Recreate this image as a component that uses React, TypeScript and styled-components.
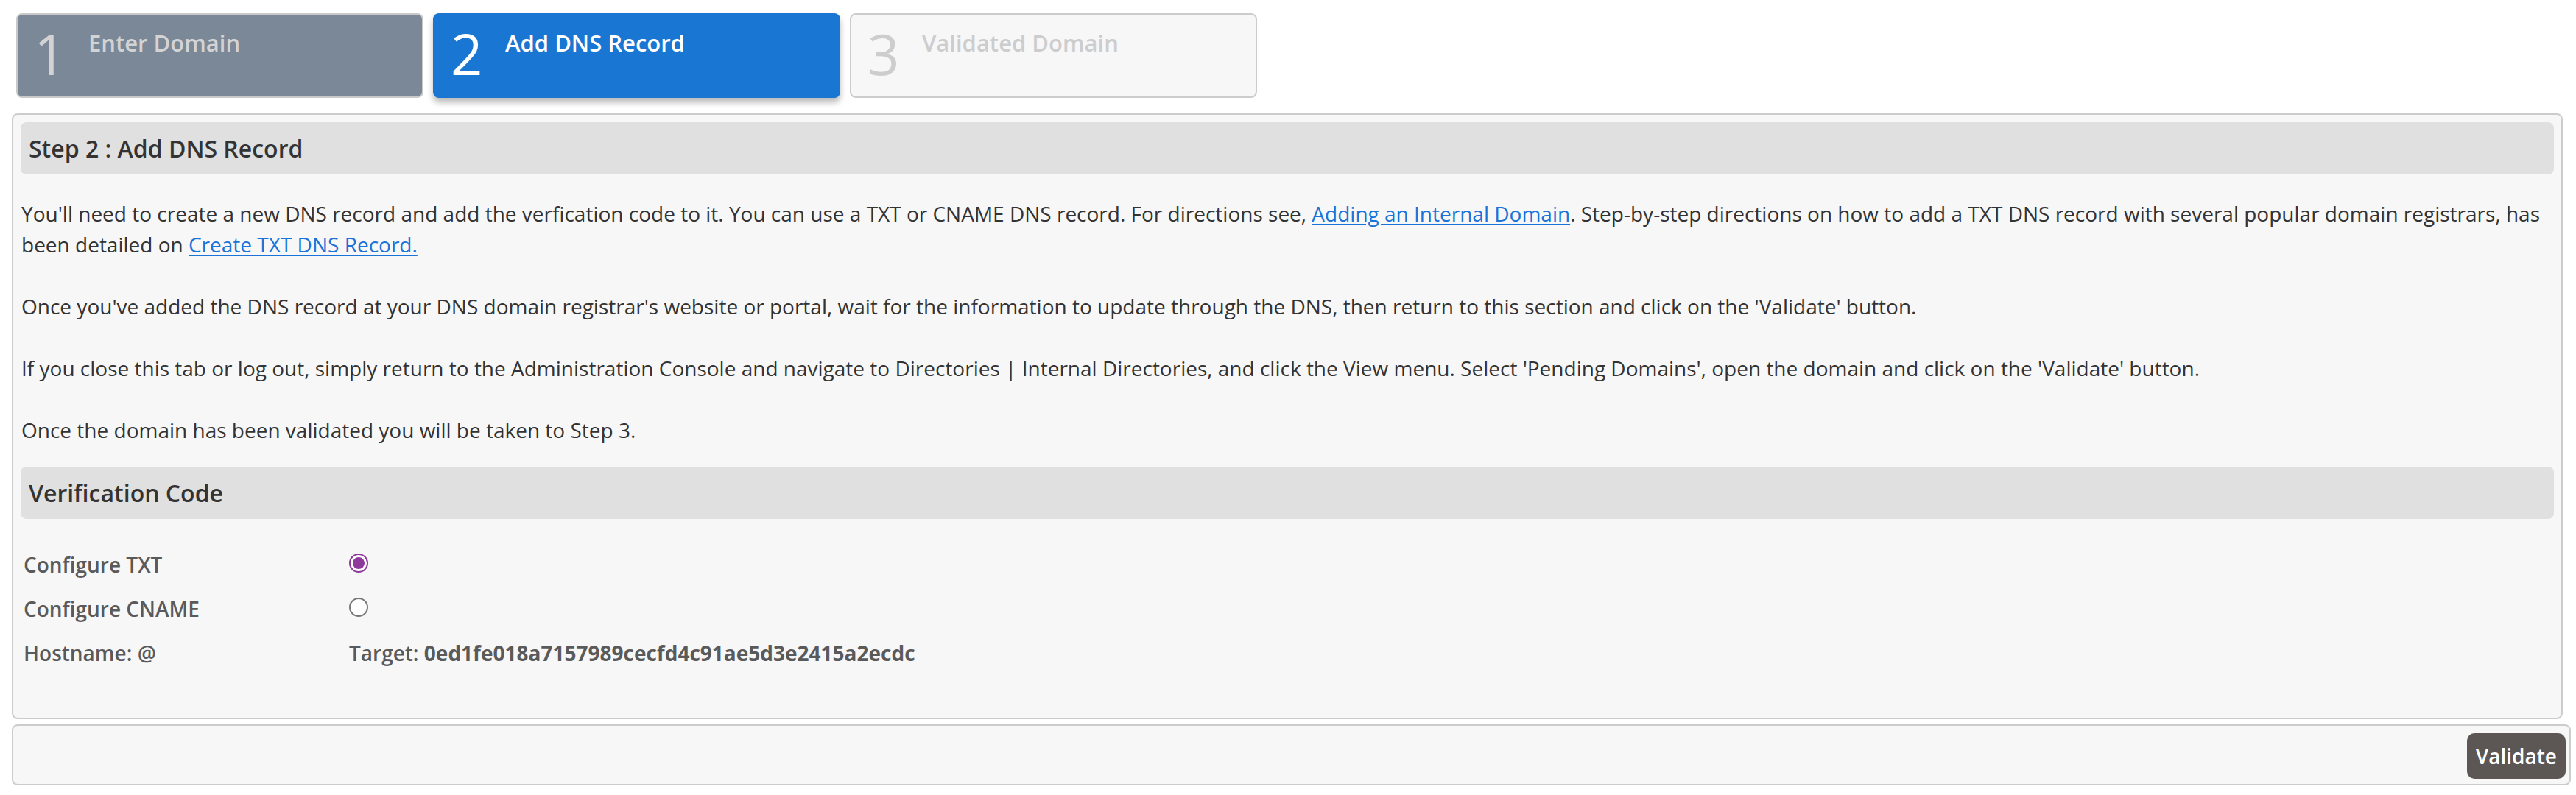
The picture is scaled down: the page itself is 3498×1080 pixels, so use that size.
import React, { useState } from "react";
import styled, { createGlobalStyle, css } from "styled-components";

const GlobalStyle = createGlobalStyle`
  html, body {
    margin: 0;
    padding: 0;
    background: #ffffff;
  }
  body {
    font-family: "Open Sans", "Liberation Sans", sans-serif;
    color: #333333;
  }
  * {
    box-sizing: border-box;
  }
`;

type StepState = "done" | "active" | "todo";

const Page = styled.div`
  padding: 18px 0 0 16px;
`;

const Steps = styled.div`
  display: flex;
  gap: 13px;
  padding-left: 6px;
`;

const stepColors = {
  done: css`
    background: #7b8898;
    border-color: #c9c9c9;
    color: #d3d3d3;
  `,
  active: css`
    background: #1976d2;
    border-color: #1976d2;
    color: #ffffff;
    box-shadow: 0 6px 9px rgba(0, 0, 0, 0.28);
  `,
  todo: css`
    background: #f7f7f7;
    border-color: #cccccc;
    color: #cdcdcd;
  `,
};

const Step = styled.div<{ $state: StepState }>`
  width: 553px;
  height: 115px;
  border: 2px solid;
  border-radius: 8px;
  display: flex;
  align-items: flex-start;
  padding: 15px 0 0 22px;
  ${({ $state }) => stepColors[$state]}
`;

const StepNumber = styled.span`
  font-size: 76px;
  line-height: 76px;
  font-weight: 400;
  width: 44px;
`;

const StepLabel = styled.span`
  font-size: 31px;
  line-height: 31px;
  font-weight: 600;
  margin: 8px 0 0 30px;
`;

const Panel = styled.section`
  margin: 21px 18px 0 0;
  background: #f7f7f7;
  border: 2px solid #cccccc;
  border-radius: 8px;
  padding: 10px;
`;

const Band = styled.h2<{ $gap?: number }>`
  margin: ${({ $gap }) => $gap ?? 0}px 0 0 0;
  height: 71px;
  display: flex;
  align-items: center;
  padding-left: 11px;
  background: #e0e0e0;
  border-radius: 8px;
  font-size: 32px;
  font-weight: 600;
  color: #333333;
`;

const Body = styled.div`
  margin-top: 32px;
  padding: 0 1px;
  font-size: 28px;
  line-height: 42px;
  color: #333333;
`;

const Link = styled.a`
  color: #1a73d8;
  text-decoration: underline;
  text-underline-offset: 3px;
  cursor: pointer;
`;

const Rows = styled.div`
  margin-top: 30px;
  padding: 0 0 50px 4px;
`;

const Row = styled.div`
  display: flex;
  align-items: center;
  height: 60px;
  font-size: 28px;
  font-weight: 600;
  color: #5a5a5a;
`;

const RowLabel = styled.div`
  width: 442px;
  padding-top: 3px;
`;

const RowValue = styled.div`
  padding-top: 3px;
  & b {
    font-weight: 700;
  }
`;

const Radio = styled.input.attrs({ type: "radio" })`
  appearance: none;
  margin: 0;
  width: 26px;
  height: 26px;
  border-radius: 50%;
  border: 2px solid #767676;
  background: #ffffff;
  display: grid;
  place-items: center;
  cursor: pointer;

  &:checked {
    border-color: #8e3a9c;
  }
  &:checked::after {
    content: "";
    width: 16px;
    height: 16px;
    border-radius: 50%;
    background: #8e3a9c;
  }
`;

const Footer = styled.div`
  margin: 7px 7px 0 0;
  background: #f7f7f7;
  border: 2px solid #cccccc;
  border-radius: 8px;
  padding: 10px 5px 7px 10px;
  display: flex;
  justify-content: flex-end;
`;

const Button = styled.button`
  height: 62px;
  padding: 0 12px;
  border: none;
  border-radius: 10px;
  background: #5c5755;
  color: #ffffff;
  font-family: "Open Sans", "Liberation Sans", sans-serif;
  font-size: 28px;
  font-weight: 600;
  cursor: pointer;
`;

const steps: { n: number; label: string; state: StepState }[] = [
  { n: 1, label: "Enter Domain", state: "done" },
  { n: 2, label: "Add DNS Record", state: "active" },
  { n: 3, label: "Validated Domain", state: "todo" },
];

export default function App() {
  const [mode, setMode] = useState<"txt" | "cname">("txt");

  return (
    <Page>
      <GlobalStyle />
      <Steps>
        {steps.map((s) => (
          <Step key={s.n} $state={s.state}>
            <StepNumber>{s.n}</StepNumber>
            <StepLabel>{s.label}</StepLabel>
          </Step>
        ))}
      </Steps>

      <Panel>
        <Band>Step 2 : Add DNS Record</Band>
        <Body>
          You'll need to create a new DNS record and add the verfication code to it. You can use a TXT or CNAME DNS
          record. For directions see, <Link>Adding an Internal Domain</Link>. Step-by-step directions on how to add a
          TXT DNS record with several popular domain registrars, has been detailed on{" "}
          <Link>Create TXT DNS Record.</Link>
          <br />
          <br />
          Once you've added the DNS record at your DNS domain registrar's website or portal, wait for the information
          to update through the DNS, then return to this section and click on the 'Validate' button.
          <br />
          <br />
          If you close this tab or log out, simply return to the Administration Console and navigate to Directories |
          Internal Directories, and click the View menu. Select 'Pending Domains', open the domain and click on the
          'Validate' button.
          <br />
          <br />
          Once the domain has been validated you will be taken to Step 3.
        </Body>

        <Band $gap={29}>Verification Code</Band>
        <Rows>
          <Row>
            <RowLabel>Configure TXT</RowLabel>
            <Radio name="mode" checked={mode === "txt"} onChange={() => setMode("txt")} />
          </Row>
          <Row>
            <RowLabel>Configure CNAME</RowLabel>
            <Radio name="mode" checked={mode === "cname"} onChange={() => setMode("cname")} />
          </Row>
          <Row>
            <RowLabel>Hostname: @</RowLabel>
            <RowValue>
              Target: <b>0ed1fe018a7157989cecfd4c91ae5d3e2415a2ecdc</b>
            </RowValue>
          </Row>
        </Rows>
      </Panel>

      <Footer>
        <Button>Validate</Button>
      </Footer>
    </Page>
  );
}
